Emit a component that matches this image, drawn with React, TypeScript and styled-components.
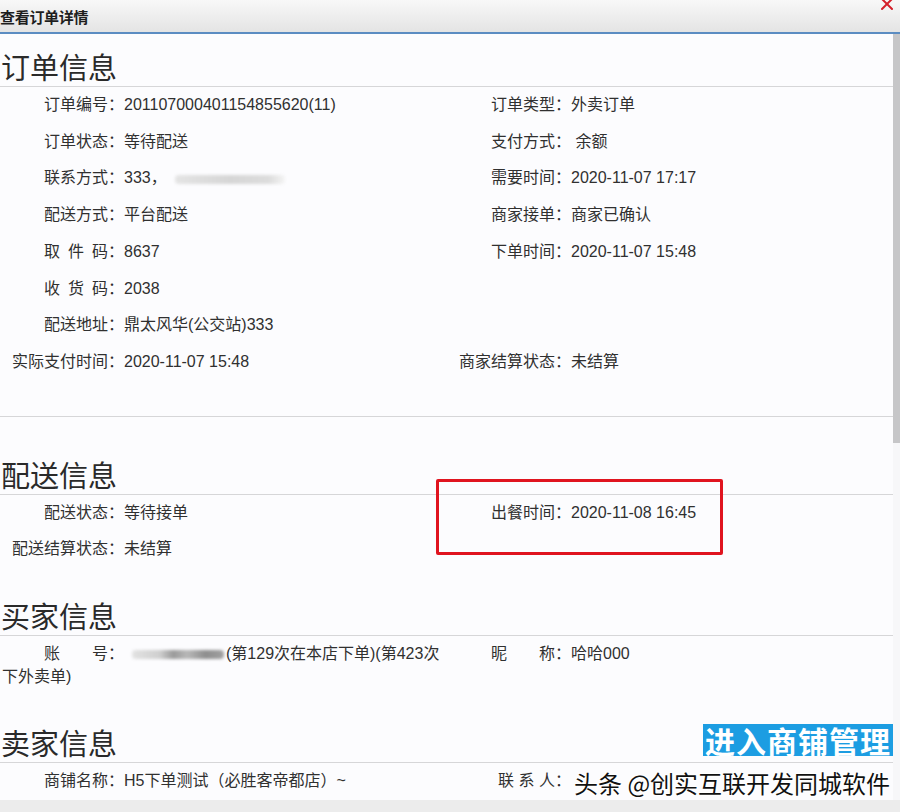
import React from 'react';
import styled, { createGlobalStyle } from 'styled-components';

const Global = createGlobalStyle`
  html, body { margin: 0; padding: 0; background: #fcfcfe; }
  body { font-family: "Liberation Sans", "Noto Sans CJK SC", sans-serif; }
`;

const Dialog = styled.div`
  width: 900px;
  height: 812px;
  display: flex;
  flex-direction: column;
  overflow: hidden;
  background: #fcfcfe;
`;

const TitleBar = styled.div`
  height: 32px;
  flex: none;
  display: flex;
  align-items: center;
  justify-content: space-between;
  background: linear-gradient(#f8f8f8, #e4e4e4);
  border-bottom: 2px solid #5b8cc2;
  padding-right: 6px;
`;

const Title = styled.div`
  font: bold 15px "Noto Sans CJK SC", sans-serif;
  color: #1e1e1e;
  margin-left: 0;
  letter-spacing: -0.3px;
`;

const Close = styled.svg`
  align-self: flex-start;
  margin-top: -3px;
`;

const Body = styled.div`
  flex: 1;
  display: flex;
  min-height: 0;
`;

const Content = styled.div`
  flex: 1;
  min-width: 0;
`;

const ScrollTrack = styled.div`
  width: 7px;
  flex: none;
  background: #f7f7f9;
`;

const ScrollThumb = styled.div`
  height: 409px;
  background: #c6c6c8;
`;

const Footer = styled.div`
  height: 12px;
  flex: none;
  background: #ececec;
`;

const Section = styled.div<{ $top: number }>`
  position: relative;
  padding-top: ${p => p.$top}px;
`;

const Heading = styled.div`
  height: 40px;
  box-sizing: border-box;
  border-bottom: 1px solid #d6d6d8;
  display: flex;
  align-items: center;
  justify-content: space-between;
  padding-left: 1px;
  font: 29px/39px "Noto Sans CJK SC", sans-serif;
  color: #2a2a2a;
`;

const Divider = styled.div`
  margin-top: 35px;
  border-bottom: 1px solid #d6d6d8;
`;

const Row = styled.div`
  display: grid;
  grid-template-columns: 447px 1fr;
  margin-left: 2px;
`;

const Cell = styled.div`
  position: relative;
  padding: 7px 0;
  line-height: 22.7px;
  font-size: 16px;
  color: #303030;
`;

const Label = styled.span`
  display: inline-block;
  width: 122px;
  text-align: right;
`;

const Blur = styled.span<{ $w: number; $dark?: boolean }>`
  display: inline-block;
  width: ${p => p.$w}px;
  height: 9px;
  margin: 0 2px 0 8px;
  vertical-align: middle;
  border-radius: 4px;
  filter: blur(1.5px);
  background: ${p =>
    p.$dark
      ? 'linear-gradient(90deg, #e2e2e2 0%, #cfcfcf 30%, #9a9a9a 45%, #b8b8b8 60%, #8e8e8e 80%, #a0a0a0 100%)'
      : 'linear-gradient(90deg, #e4e4e4 0%, #d6d6d6 50%, #dcdcdc 85%, #f4f4f4 100%)'};
`;

const Highlight = styled.div`
  position: absolute;
  left: 436px;
  top: 62px;
  width: 287px;
  height: 76px;
  box-sizing: border-box;
  border: 3px solid #e0141f;
  border-radius: 2px;
  pointer-events: none;
`;

const ShopButton = styled.div`
  height: 32px;
  padding: 0 2px;
  background: #1c9de2;
  color: #fff;
  font: bold 30px/32px "Noto Sans CJK SC", sans-serif;
  letter-spacing: 1px;
  align-self: flex-start;
  margin-top: 1px;
`;

const Watermark = styled.span`
  position: absolute;
  left: 125px;
  top: 5px;
  white-space: nowrap;
  font: 24px/30px "Noto Sans CJK SC", sans-serif;
  color: #111;
  text-shadow: 0 0 2px #fff, 1px 1px 0 #fff, -1px -1px 0 #fff, 1px -1px 0 #fff, -1px 1px 0 #fff;
`;

type Pair = [string, React.ReactNode] | null;

const InfoRow: React.FC<{ left: Pair; right?: Pair }> = ({ left, right }) => (
  <Row>
    <Cell>
      {left && (
        <>
          <Label>{left[0]}</Label>
          {left[1]}
        </>
      )}
    </Cell>
    <Cell>
      {right && (
        <>
          <Label>{right[0]}</Label>
          {right[1]}
        </>
      )}
    </Cell>
  </Row>
);

export default function App() {
  return (
    <>
      <Global />
      <Dialog>
        <TitleBar>
          <Title>查看订单详情</Title>
          <Close width="14" height="14" viewBox="0 0 14 14">
            <path d="M2 2 L12 12 M12 2 L2 12" stroke="#d4202a" strokeWidth="2" strokeLinecap="round" />
          </Close>
        </TitleBar>
        <Body>
          <Content>
            <Section $top={13}>
              <Heading>订单信息</Heading>
              <InfoRow left={['订单编号：', '201107000401154855620(11)']} right={['订单类型：', '外卖订单']} />
              <InfoRow left={['订单状态：', '等待配送']} right={['支付方式：', ' 余额']} />
              <InfoRow
                left={['联系方式：', <>333，<Blur $w={110} /></>]}
                right={['需要时间：', '2020-11-07 17:17']}
              />
              <InfoRow left={['配送方式：', '平台配送']} right={['商家接单：', '商家已确认']} />
              <InfoRow left={['取\u2002件\u2002码：', '8637']} right={['下单时间：', '2020-11-07 15:48']} />
              <InfoRow left={['收\u2002货\u2002码：', '2038']} />
              <InfoRow left={['配送地址：', '鼎太风华(公交站)333']} />
              <InfoRow left={['实际支付时间：', '2020-11-07 15:48']} right={['商家结算状态：', '未结算']} />
              <Divider />
            </Section>
            <Section $top={38}>
              <Heading>配送信息</Heading>
              <InfoRow left={['配送状态：', '等待接单']} right={['出餐时间：', '2020-11-08 16:45']} />
              <InfoRow left={['配送结算状态：', '未结算']} />
              <Highlight />
            </Section>
            <Section $top={28}>
              <Heading>买家信息</Heading>
              <InfoRow
                left={[
                  '账\u3000\u3000号：',
                  <>
                    <Blur $w={92} $dark />
                    (第129次在本店下单)(第423次<br />下外卖单)
                  </>,
                ]}
                right={['昵\u3000\u3000称：', '哈哈000']}
              />
            </Section>
            <Section $top={28}>
              <Heading>
                卖家信息
                <ShopButton>进入商铺管理</ShopButton>
              </Heading>
              <Row>
                <Cell>
                  <Label>商铺名称：</Label>H5下单测试（必胜客帝都店）~
                </Cell>
                <Cell>
                  <Label>联 系 人：</Label>
                  <Watermark>头条 @创实互联开发同城软件</Watermark>
                </Cell>
              </Row>
            </Section>
          </Content>
          <ScrollTrack>
            <ScrollThumb />
          </ScrollTrack>
        </Body>
        <Footer />
      </Dialog>
    </>
  );
}
